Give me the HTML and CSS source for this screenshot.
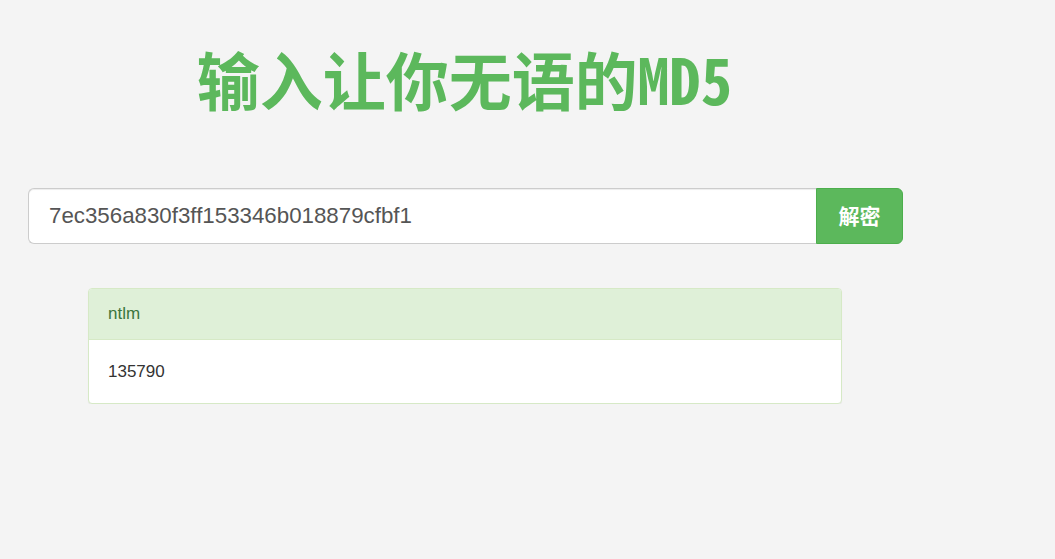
FILE: index.html
```html
<!DOCTYPE html>
<html lang="zh-CN">
<head>
<meta charset="utf-8">
<title>输入让你无语的MD5</title>
<link rel="stylesheet" href="styles.css">
</head>
<body>
<main class="page">
  <h1 class="title">输入让你无语的MD5</h1>
  <form class="search">
    <input class="search-input" type="text" value="7ec356a830f3ff153346b018879cfbf1">
    <button class="search-btn" type="button">解密</button>
  </form>
  <section class="panel">
    <div class="panel-heading">ntlm</div>
    <div class="panel-body">135790</div>
  </section>
</main>
</body>
</html>
```
FILE: styles.css
```css
html, body {
  margin: 0;
  padding: 0;
  background: #f4f4f4;
}
body {
  font-family: "Liberation Sans", Arial, "Noto Sans CJK SC", sans-serif;
  color: #333;
}
.page {
  width: 875px;
  margin-left: 28px;
  padding-top: 47px;
}
.title {
  margin: 0;
  font-family: "Noto Sans Mono CJK SC", "Noto Sans CJK SC", monospace;
  font-weight: 700;
  font-size: 63px;
  line-height: 62px;
  color: #5cb85c;
  text-align: center;
  padding-right: 2px;
}
.search {
  display: flex;
  margin: 79px 0 0;
  height: 56px;
}
.search-input {
  flex: 1;
  box-sizing: border-box;
  height: 56px;
  margin: 0;
  padding: 0 20px;
  border: 1px solid #ccc;
  border-right: 0;
  border-radius: 6px 0 0 6px;
  background: #fff;
  font-family: "Liberation Sans", Arial, sans-serif;
  font-size: 22.3px;
  color: #555;
  box-shadow: inset 0 1px 1px rgba(0,0,0,.075);
  outline: none;
}
.search-btn {
  width: 87px;
  height: 56px;
  margin: 0;
  border: 1px solid #4cae4c;
  border-radius: 0 6px 6px 0;
  background: #5cb85c;
  color: #fff;
  font-family: "Noto Sans CJK SC", sans-serif;
  font-weight: 700;
  font-size: 21px;
  padding: 0 0 2px;
}
.panel {
  width: 754px;
  box-sizing: border-box;
  margin: 44px 0 0 60px;
  border: 1px solid #d6e9c6;
  border-radius: 4px;
  background: #fff;
  box-shadow: 0 1px 1px rgba(0,0,0,.05);
  overflow: hidden;
}
.panel-heading {
  background: #dff0d8;
  color: #3c763d;
  border-bottom: 1px solid #d6e9c6;
  font-size: 17px;
  line-height: 24px;
  padding: 13px 19px 13px;
}
.panel-body {
  font-size: 17px;
  line-height: 24px;
  padding: 20px 19px 19px;
  color: #333;
}
```
